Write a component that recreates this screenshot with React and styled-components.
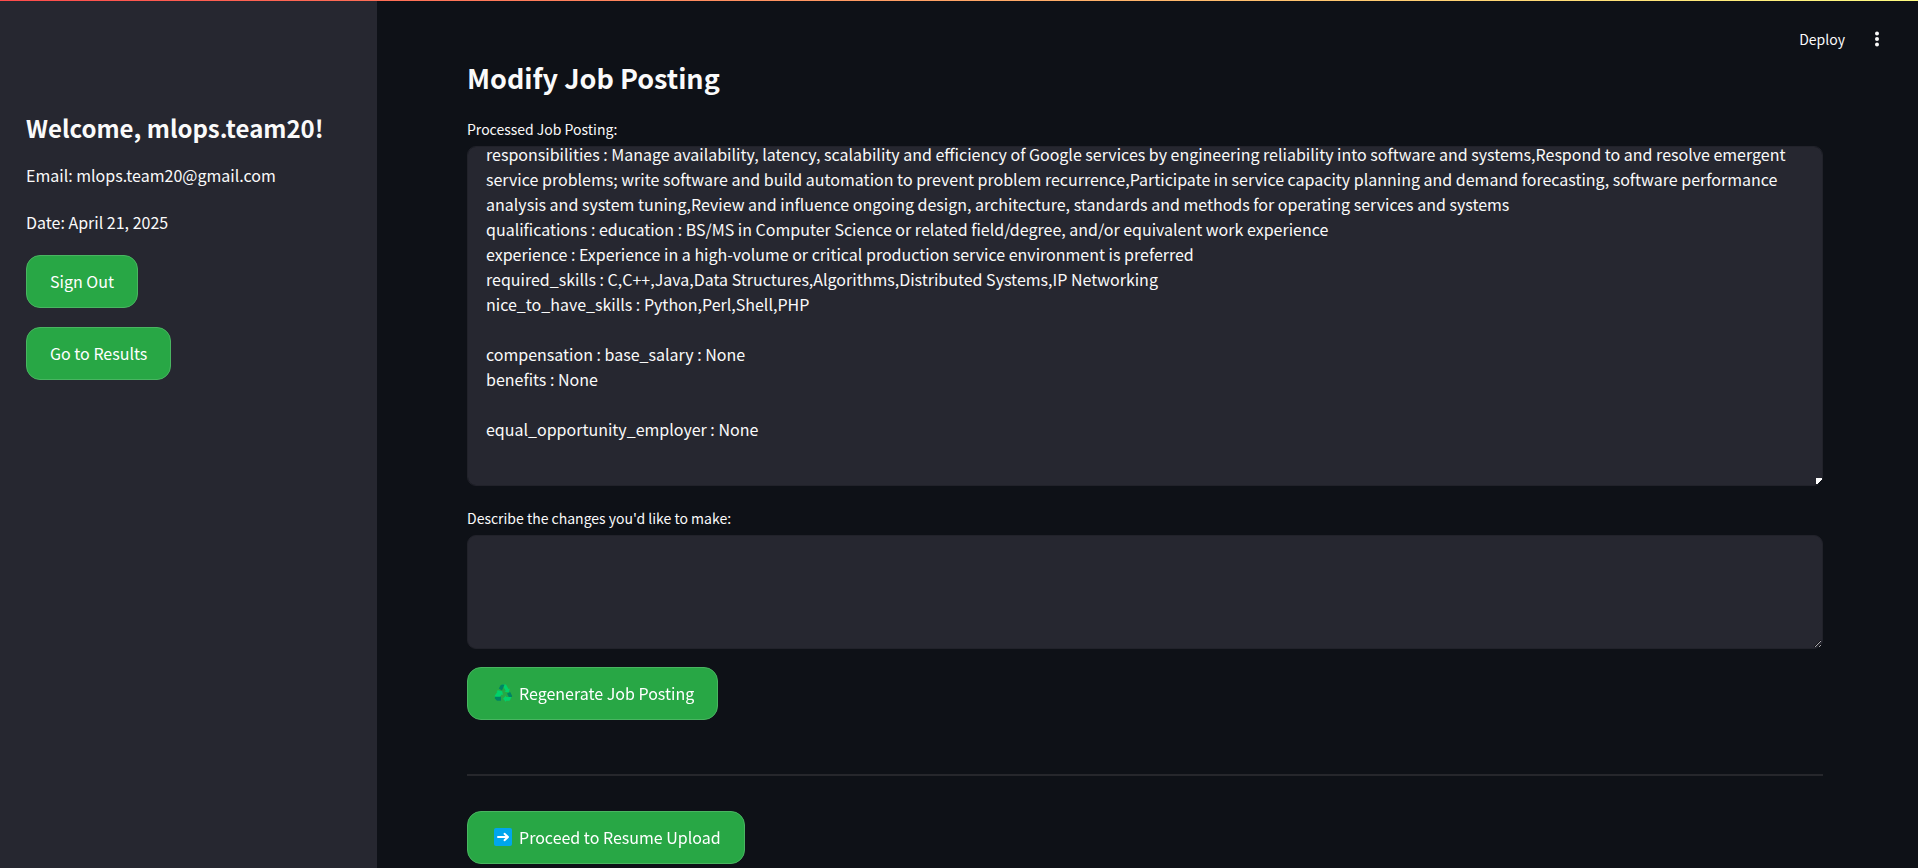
import React, { useLayoutEffect, useRef } from "react";
import styled, { createGlobalStyle } from "styled-components";

const posting = `responsibilities : Manage availability, latency, scalability and efficiency of Google services by engineering reliability into software and systems,Respond to and resolve emergent service problems; write software and build automation to prevent problem recurrence,Participate in service capacity planning and demand forecasting, software performance analysis and system tuning,Review and influence ongoing design, architecture, standards and methods for operating services and systems
qualifications : education : BS/MS in Computer Science or related field/degree, and/or equivalent work experience
experience : Experience in a high-volume or critical production service environment is preferred
required_skills : C,C++,Java,Data Structures,Algorithms,Distributed Systems,IP Networking
nice_to_have_skills : Python,Perl,Shell,PHP

compensation : base_salary : None
benefits : None

equal_opportunity_employer : None
`;

const GlobalStyle = createGlobalStyle`
  *, *::before, *::after { box-sizing: border-box; }
  body {
    margin: 0;
    background: #0e1117;
    color: #fafafa;
    font-family: "Source Sans Pro", "Noto Sans CJK SC", sans-serif;
    font-size: 16px;
    line-height: 28px;
  }
  h1, h2, p { margin: 0; }
  button, textarea { font: inherit; color: inherit; }
`;

const Shell = styled.div`
  display: flex;
  flex-direction: column;
  height: 100vh;
  overflow: hidden;
`;

const Decoration = styled.div`
  flex: none;
  height: 1px;
  background: linear-gradient(90deg, #ff4b4b, #fffd80);
`;

const Columns = styled.div`
  display: flex;
  flex: 1;
  min-height: 0;
`;

const Sidebar = styled.aside`
  flex: none;
  width: 377px;
  padding: 107px 26px 0;
  background: #262730;
  display: flex;
  flex-direction: column;
  align-items: flex-start;
`;

const SidebarTitle = styled.h2`
  font-size: 24px;
  font-weight: 600;
  line-height: 40px;
  margin-bottom: 13px;
`;

const SidebarText = styled.p`
  margin-bottom: 19px;
`;

const Button = styled.button`
  display: flex;
  align-items: center;
  gap: 4px;
  height: 53px;
  padding: 0 23px 1px;
  border: 1px solid #49b561;
  border-radius: 14px;
  background: #28a745;
  color: #fff;
  cursor: pointer;
`;

const ButtonStack = styled.div`
  display: flex;
  flex-direction: column;
  align-items: flex-start;
  gap: 19px;
`;

const Main = styled.main`
  position: relative;
  flex: 1;
  min-width: 0;
  overflow: hidden;
  padding: 53px 95px 0 90px;
  display: flex;
  flex-direction: column;
  align-items: flex-start;
`;

const Toolbar = styled.header`
  position: absolute;
  top: 24px;
  right: 33px;
  display: flex;
  align-items: center;
  gap: 24px;
`;

const ToolButton = styled.button`
  display: flex;
  align-items: center;
  padding: 0;
  border: 0;
  background: none;
  font-size: 14px;
  cursor: pointer;
`;

const Title = styled.h1`
  font-size: 27px;
  font-weight: 600;
  line-height: 48px;
  margin-bottom: 15px;
`;

const Field = styled.div`
  width: 100%;
  display: flex;
  flex-direction: column;
  margin-bottom: ${(p) => p.$space}px;
`;

const Label = styled.label`
  font-size: 14px;
  line-height: 24px;
  margin-bottom: 5px;
`;

const TextArea = styled.textarea`
  display: block;
  width: 100%;
  height: ${(p) => p.$height}px;
  padding: 18px;
  border: 1px solid #21222a;
  border-radius: 9px;
  outline: none;
  background: #262730;
  color: #fafafa;
  line-height: 25px;
  resize: vertical;

  &::-webkit-scrollbar { width: 6px; height: 6px; background: transparent; }
  &::-webkit-scrollbar-thumb { background: transparent; }
`;

const PostingArea = styled(TextArea)`
  &::-webkit-resizer {
    background: linear-gradient(135deg, #fff 60%, #0e1117 60%) 9px 8px / 6px 6px no-repeat;
  }
`;

const Divider = styled.hr`
  width: 100%;
  height: 2px;
  margin: 54px 0 35px;
  border: 0;
  background: #26272c;
`;

function DotsIcon() {
  return (
    <svg width="16" height="18" viewBox="0 0 16 18" fill="currentColor" aria-hidden="true">
      <circle cx="8" cy="3.500" r="2" />
      <circle cx="8" cy="9" r="2" />
      <circle cx="8" cy="14.500" r="2" />
    </svg>
  );
}

function RecycleIcon() {
  return (
    <svg width="24" height="18" viewBox="1 0 24 18" aria-hidden="true">
      <path fill="#00d26a" d="M12 .5h4L18.500 5l1.200-.6-.9 4.200-4.300-.9 1.200-.9L13 2z" />
      <path fill="#008463" d="M10.500 1.500L12 .5l2.500.2L12 6.500 8.800 4.500z" />
      <path fill="#00d26a" d="M8 6.200l4.200 1L13 11l-1.300-.5L9.500 13.500H6L4.500 12 7.500 7.800 6.400 7.300z" />
      <path fill="#008463" d="M5 12.800h6v4H7L4.800 14.500z" />
      <path fill="#00d26a" d="M13 14.800l3-3.400v1.500h5.500l-1.500 3.300-1 .6h-3V18z" />
      <path fill="#008463" d="M17 9.500l3.200-1.600 2 4-.4 1.200h-3z" />
    </svg>
  );
}

function ArrowIcon() {
  return (
    <svg width="24" height="18" viewBox="1 0 24 18" aria-hidden="true">
      <rect x="4" y="0" width="18" height="18" rx="2" fill="#00a6ed" />
      <path d="M8 9h9M14.500 5.800L18 9l-3.500 3.200" fill="none" stroke="#fff" strokeWidth="2" strokeLinecap="round" strokeLinejoin="round" />
    </svg>
  );
}

export default function App() {
  const postingRef = useRef(null);

  useLayoutEffect(() => {
    postingRef.current.scrollTop = postingRef.current.scrollHeight;
  }, []);

  return (
    <Shell>
      <GlobalStyle />
      <Decoration />
      <Columns>
        <Sidebar>
          <SidebarTitle>Welcome, mlops.team20!</SidebarTitle>
          <SidebarText>Email: mlops.team20@gmail.com</SidebarText>
          <SidebarText>Date: April 21, 2025</SidebarText>
          <ButtonStack>
            <Button type="button">Sign Out</Button>
            <Button type="button">Go to Results</Button>
          </ButtonStack>
        </Sidebar>
        <Main>
          <Toolbar>
            <ToolButton type="button">Deploy</ToolButton>
            <ToolButton type="button" aria-label="Main menu"><DotsIcon /></ToolButton>
          </Toolbar>
          <Title>Modify Job Posting</Title>
          <Field $space={20}>
            <Label htmlFor="posting">Processed Job Posting:</Label>
            <PostingArea id="posting" ref={postingRef} $height={340} defaultValue={posting} spellCheck={false} />
          </Field>
          <Field $space={18}>
            <Label htmlFor="changes">Describe the changes you'd like to make:</Label>
            <TextArea id="changes" $height={114} />
          </Field>
          <Button type="button"><RecycleIcon />Regenerate Job Posting</Button>
          <Divider />
          <Button type="button"><ArrowIcon />Proceed to Resume Upload</Button>
        </Main>
      </Columns>
    </Shell>
  );
}
